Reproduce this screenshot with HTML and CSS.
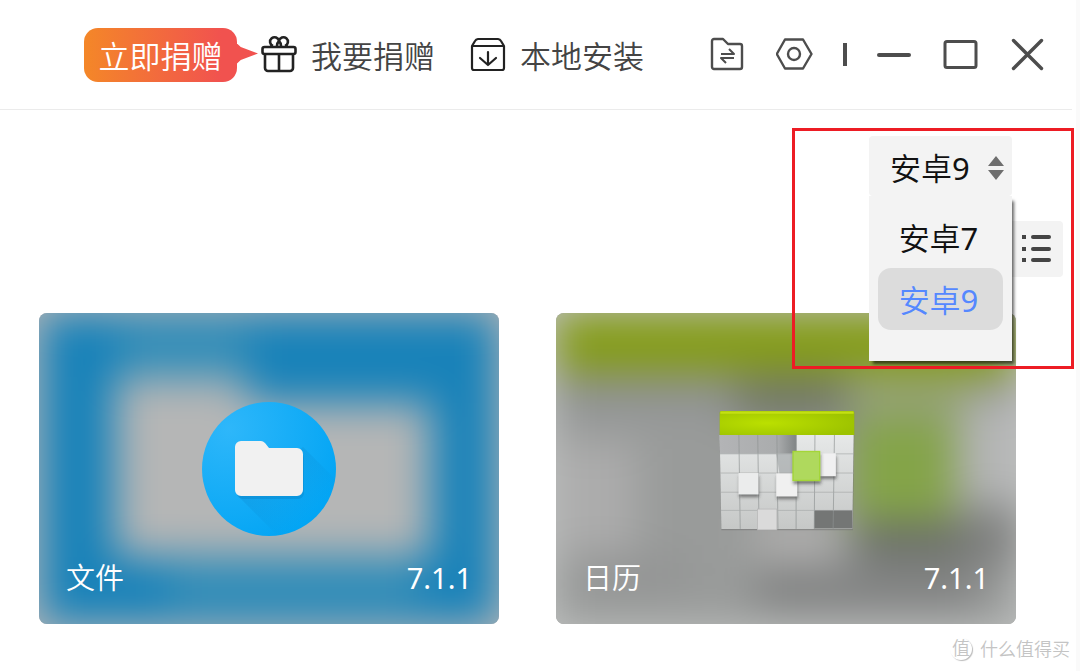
FILE: index.html
```html
<!DOCTYPE html>
<html lang="zh-CN">
<head>
    <meta charset="UTF-8">
    <meta name="viewport" content="width=device-width, initial-scale=1.0">
    <title>应用</title>
    <link rel="stylesheet" href="styles.css">
</head>
<body>
    <div class="app">
        <header class="topbar">
            <a href="#" class="badge">立即捐赠</a>
            <button class="action">
                <svg width="36" height="40" viewBox="0 0 36 40" fill="none" stroke="#222" stroke-width="2.6" stroke-linejoin="round">
                    <rect x="1.5" y="12" width="33" height="7" rx="2"/>
                    <path d="M4 19v14a3 3 0 0 0 3 3h22a3 3 0 0 0 3-3V19M18 20v16"/>
                    <path d="M12 11a4.500 4.500 0 1 1 6-5a4.500 4.500 0 1 1 6 5M18 6c-1.500 1.500-2 3-2 5M18 6c1.500 1.500 2 3 2 5"/>
                </svg>
                <span>我要捐赠</span>
            </button>
            <button class="action">
                <svg width="36" height="40" viewBox="0 0 36 40" fill="none" stroke="#222" stroke-width="2.2" stroke-linecap="round" stroke-linejoin="round">
                    <path d="M2 11v22a2 2 0 0 0 2 2h28a2 2 0 0 0 2-2V11l-3-5a4 4 0 0 0-3-2H8a4 4 0 0 0-3 2zM2 11h32"/>
                    <path d="M18 17v13M10 23l8 7 8-7"/>
                </svg>
                <span>本地安装</span>
            </button>
            <div class="controls">
                <button aria-label="文件传输">
                    <svg width="40" height="40" viewBox="0 0 40 40" fill="none" stroke="#4d4d4d" stroke-width="2.4" stroke-linejoin="round">
                        <path d="M3 6a2 2 0 0 1 2-2h9l5 5h12a2 2 0 0 1 2 2v21a2 2 0 0 1-2 2H5a2 2 0 0 1-2-2z"/>
                        <path d="M12 19h13l-5-5M25 23H12l5 5" stroke-width="2"/>
                    </svg>
                </button>
                <button aria-label="设置">
                    <svg width="40" height="40" viewBox="0 0 40 40" fill="none" stroke="#4d4d4d" stroke-width="2.4" stroke-linejoin="round">
                        <path d="M9 4.500h18L35.500 19 27 33.500H9L.8 19z"/>
                        <circle cx="18" cy="19" r="6"/>
                    </svg>
                </button>
                <span class="divider"></span>
                <button aria-label="最小化">
                    <svg width="40" height="40" viewBox="0 0 40 40" stroke="#4d4d4d" stroke-width="4" stroke-linecap="round"><path d="M5 20h30"/></svg>
                </button>
                <button aria-label="最大化">
                    <svg width="40" height="40" viewBox="0 0 40 40" fill="none" stroke="#4d4d4d" stroke-width="3"><rect x="4" y="6.500" width="31" height="26" rx="2"/></svg>
                </button>
                <button aria-label="关闭">
                    <svg width="40" height="40" viewBox="0 0 40 40" stroke="#4d4d4d" stroke-width="3.400" stroke-linecap="round"><path d="M5.500 5.500l28 28M33.500 5.500l-28 28"/></svg>
                </button>
            </div>
        </header>

        <main>
            <div class="toolbar">
                <div class="version">
                    <select aria-label="安卓版本">
                        <option>安卓7</option>
                        <option selected>安卓9</option>
                    </select>
                    <svg class="arrows" width="16" height="26" viewBox="0 0 16 26" fill="#6e6e6e"><path d="M8 1l8 10H0zM0 15h16L8 25z"/></svg>
                    <div class="menu">
                        <button>安卓7</button>
                        <button class="active">安卓9</button>
                    </div>
                </div>
                <button class="view" aria-label="列表视图">
                    <svg width="32" height="32" viewBox="0 0 32 32" fill="#444">
                        <rect x="3" y="2" width="4" height="4"/><rect x="12" y="2" width="20" height="4" rx="2"/>
                        <rect x="3" y="14" width="4" height="4"/><rect x="12" y="14" width="20" height="4" rx="2"/>
                        <rect x="3" y="25" width="4" height="4"/><rect x="12" y="25" width="20" height="4" rx="2"/>
                    </svg>
                </button>
                <div class="highlight"></div>
            </div>

            <div class="cards">
                <div class="card">
                    <svg class="backdrop" viewBox="0 0 460 311" preserveAspectRatio="none">
                        <defs>
                            <filter id="soft" filterUnits="userSpaceOnUse" x="-80" y="-80" width="620" height="471" color-interpolation-filters="sRGB"><feGaussianBlur stdDeviation="20"/></filter>
                        </defs>
                        <rect width="460" height="311" fill="#b2b4b6"/>
                        <g filter="url(#soft)">
                            <rect x="-100" y="-100" width="660" height="511" fill="#b2b4b6"/>
                            <rect x="2" y="0" width="456" height="311" fill="#1882b9"/>
                            <path d="M76 64H208V90H392V244H76z" fill="#b5b6b6"/>
                            <path d="M80 10h130v50H80zM130 250h250v45H130z" fill="#4796b8" opacity=".6"/>
                        </g>
                    </svg>
                    <svg class="icon" width="136" height="136" viewBox="0 0 136 136">
                        <defs>
                            <radialGradient id="disc" cx=".2" cy=".2" r=".9"><stop offset="0" stop-color="#2eb7fa"/><stop offset="1" stop-color="#03a5f4"/></radialGradient>
                            <linearGradient id="cast" x1="0" y1="0" x2="1" y2="1"><stop offset="0" stop-color="#0877bb" stop-opacity=".35"/><stop offset=".62" stop-color="#0877bb" stop-opacity="0"/></linearGradient>
                            <clipPath id="discClip"><circle cx="68" cy="68" r="67"/></clipPath>
                        </defs>
                        <circle cx="68" cy="68" r="67" fill="url(#disc)"/>
                        <path d="M36 94L102 46l50 50v60H98z" fill="url(#cast)" clip-path="url(#discClip)"/>
                        <path d="M35 47a6 6 0 0 1 6-6h19q2 0 4 2l5 6h27a6 6 0 0 1 6 6v35a6 6 0 0 1-6 6H41a6 6 0 0 1-6-6z" fill="#0878b8" opacity=".3" transform="translate(1 2)"/>
                        <path d="M34 46a6 6 0 0 1 6-6h20q2 0 4 2l4 5h28a6 6 0 0 1 6 6v36a6 6 0 0 1-6 6H40a6 6 0 0 1-6-6z" fill="#f1f1f1"/>
                    </svg>
                    <div class="caption"><span>文件</span><span>7.1.1</span></div>
                </div>

                <div class="card">
                    <svg class="backdrop" viewBox="0 0 460 311" preserveAspectRatio="none">
                        <rect width="460" height="311" fill="#9c9e9d"/>
                        <g filter="url(#soft)">
                            <rect x="-100" y="-100" width="660" height="511" fill="#bfc1c0"/>
                            <rect x="-2" y="-2" width="464" height="315" fill="#999b9a"/>
                            <rect x="0" y="0" width="460" height="60" fill="#859d16"/>
                            <rect x="0" y="62" width="180" height="32" fill="#8d9090"/>
                            <rect x="180" y="62" width="110" height="48" fill="#737968"/>
                            <rect x="300" y="62" width="120" height="46" fill="#95a278"/>
                            <rect x="0" y="130" width="80" height="110" fill="#acacac"/>
                            <rect x="294" y="106" width="104" height="102" fill="#84a448"/>
                            <rect x="404" y="90" width="60" height="100" fill="#b4b5b5"/>
                            <rect x="200" y="205" width="80" height="42" fill="#b0afae"/>
                            <rect x="300" y="209" width="130" height="40" fill="#6a6e68"/>
                            <rect x="410" y="195" width="55" height="60" fill="#808180"/>
                            <rect x="200" y="258" width="220" height="35" fill="#7e7f7f"/>
                            <rect x="30" y="245" width="100" height="30" fill="#929393"/>
                        </g>
                    </svg>
                    <svg class="icon" width="138" height="124" viewBox="54 39 410 368">
                        <defs>
                            <radialGradient id="lime" cx=".35" cy=".5" r=".7"><stop offset="0" stop-color="#bbe000"/><stop offset="1" stop-color="#9cc200"/></radialGradient>
                            <linearGradient id="tiles" x1="0" y1="0" x2="0" y2="1"><stop offset="0" stop-color="#e6e8e8"/><stop offset="1" stop-color="#c6c8c7"/></linearGradient>
                            <linearGradient id="past" x1="0" y1="0" x2="1" y2="0"><stop offset="0" stop-color="#b3b4b6"/><stop offset=".75" stop-color="#aaacad"/><stop offset="1" stop-color="#808485"/></linearGradient>
                            <filter id="drop" x="-50%" y="-50%" width="200%" height="220%"><feDropShadow dx="2" dy="9" stdDeviation="5" flood-color="#333" flood-opacity=".55"/></filter>
                        </defs>
                        <path d="M62 52h400v72l-4 281H67L62 124z" fill="#777" opacity=".6"/>
                        <path d="M62 122h398l-4 279H67z" fill="url(#tiles)"/>
                        <path d="M62 122h228v56H63z" fill="url(#past)"/>
                        <path d="M230 178h60v60h-50z" fill="#9da2a3" opacity=".6"/>
                        <path d="M343 345h113v55H343z" fill="#747675"/>
                        <path d="M119 122l4 279M175 122l4 279M232 122l3 279M289 122v279M345 122l-2 279M403 122l-4 279" stroke="#8e9292" stroke-width="2" fill="none"/>
                        <path d="M62 178h398M64 235h396M65 292h394M66 346h391" stroke="#a5a8a8" stroke-width="2" fill="none"/>
                        <path d="M62 56q0-5 5-5h390q5 0 5 5v66H62z" fill="url(#lime)"/>
                        <path d="M64 52h396v7H64z" fill="#c4e012"/>
                        <g filter="url(#drop)">
                            <rect x="358" y="176" width="49" height="68" fill="#f0f0f1"/>
                            <rect x="118" y="235" width="59" height="63" fill="#ebecec"/>
                            <rect x="230" y="236" width="62" height="68" fill="#f0f0f0"/>
                        </g>
                        <rect x="174" y="342" width="58" height="62" fill="#dadada" stroke="#b4b4b4" stroke-width="2"/>
                        <g filter="url(#drop)"><rect x="280" y="171" width="79" height="86" fill="#afd95d" stroke="#a4d637" stroke-width="4"/></g>
                    </svg>
                    <div class="caption"><span>日历</span><span>7.1.1</span></div>
                </div>
            </div>
        </main>

        <footer class="watermark">
            <span class="mark">值</span>
            <span>什么值得买</span>
        </footer>
    </div>
</body>
</html>
```
FILE: styles.css
```css
* {
    box-sizing: border-box;
}
body {
    margin: 0;
    background: #fff;
    font-family: "Noto Sans", "Noto Sans CJK SC DemiLight", "Noto Sans CJK SC", sans-serif;
    font-size: 31px;
    color: #444;
}
button, select {
    font: inherit;
    color: inherit;
    border: 0;
    padding: 0;
    background: none;
    cursor: pointer;
}
svg {
    display: block;
}
.app {
    min-height: 100vh;
    border-right: 4px solid #fafafa;
}

/* top bar */
.topbar {
    display: flex;
    align-items: center;
    height: 110px;
    margin-right: 4px;
    padding: 0 24px 0 84px;
    border-bottom: 1px solid #ebebeb;
}
.badge {
    position: relative;
    width: 153px;
    height: 54px;
    margin-right: 24px;
    padding-top: 2px;
    border-radius: 14px;
    background: linear-gradient(90deg, #f48728, #f1524f 90%);
    color: #fff;
    line-height: 53px;
    text-align: center;
    text-decoration: none;
}
.badge::after {
    content: "";
    position: absolute;
    left: 100%;
    top: 16px;
    width: 21px;
    height: 20px;
    background: #f1524f;
    clip-path: polygon(0 0, 18% 18%, 100% 50%, 18% 82%, 0 100%);
}
.action {
    display: flex;
    align-items: center;
    gap: 14px;
    margin-right: 35px;
    line-height: 53px;
    white-space: nowrap;
}
.action span {
    padding-top: 3px;
}
.controls {
    display: flex;
    align-items: center;
    gap: 27px;
    margin-left: auto;
}
.divider {
    width: 4px;
    height: 23px;
    background: #4d4d4d;
}

/* version picker */
.toolbar {
    position: relative;
    display: flex;
    flex-direction: column;
    align-items: flex-end;
    gap: 25px;
    padding: 26px 13px 36px;
    color: #111;
}
.version {
    position: relative;
    z-index: 2;
    width: 143px;
    margin-right: 51px;
}
.version select {
    display: block;
    width: 100%;
    height: 60px;
    padding: 3px 0 0 21px;
    border-radius: 4px;
    background: #f3f3f3;
    appearance: none;
}
.arrows {
    position: absolute;
    right: 8px;
    top: 19px;
    pointer-events: none;
}
.menu {
    position: absolute;
    top: 100%;
    left: 0;
    width: 100%;
    padding: 10px 9px 31px;
    background: #f3f3f3;
    box-shadow: 3px 4px 3px -1px rgba(0, 0, 0, 0.6);
}
.menu button {
    display: block;
    width: 100%;
    height: 62px;
    padding: 0 4px 2px 0;
    border-radius: 13px;
}
.menu .active {
    background: #dcdcdc;
    color: #5588ff;
}
.view {
    display: grid;
    place-items: center;
    width: 56px;
    height: 56px;
    border-radius: 4px;
    background: #f3f3f3;
}
.highlight {
    position: absolute;
    z-index: 3;
    top: 18px;
    right: 2px;
    width: 282px;
    height: 241px;
    border: 3px solid #ed1c24;
    pointer-events: none;
}

/* app cards */
.cards {
    display: grid;
    grid-template-columns: 1fr 1fr;
    gap: 57px;
    padding: 0 60px 0 39px;
}
.card {
    display: grid;
    overflow: hidden;
    aspect-ratio: 460 / 311;
    border-radius: 8px;
    color: #fff;
    font-size: 29px;
}
.backdrop, .icon, .caption {
    grid-area: 1 / 1;
}
.backdrop {
    width: 100%;
    height: 100%;
}
.icon {
    place-self: center;
}
.caption {
    display: flex;
    justify-content: space-between;
    align-self: end;
    padding: 0 27px 24px;
    line-height: 44px;
}

.watermark {
    display: flex;
    justify-content: flex-end;
    align-items: center;
    gap: 8px;
    padding: 13px 6px 0;
    color: #c4c4c4;
    font-size: 18px;
    line-height: 24px;
}
.mark {
    width: 22px;
    height: 22px;
    border-radius: 50%;
    box-shadow: 1px 1px 1px #bbb;
    line-height: 20px;
    text-align: center;
}
```
